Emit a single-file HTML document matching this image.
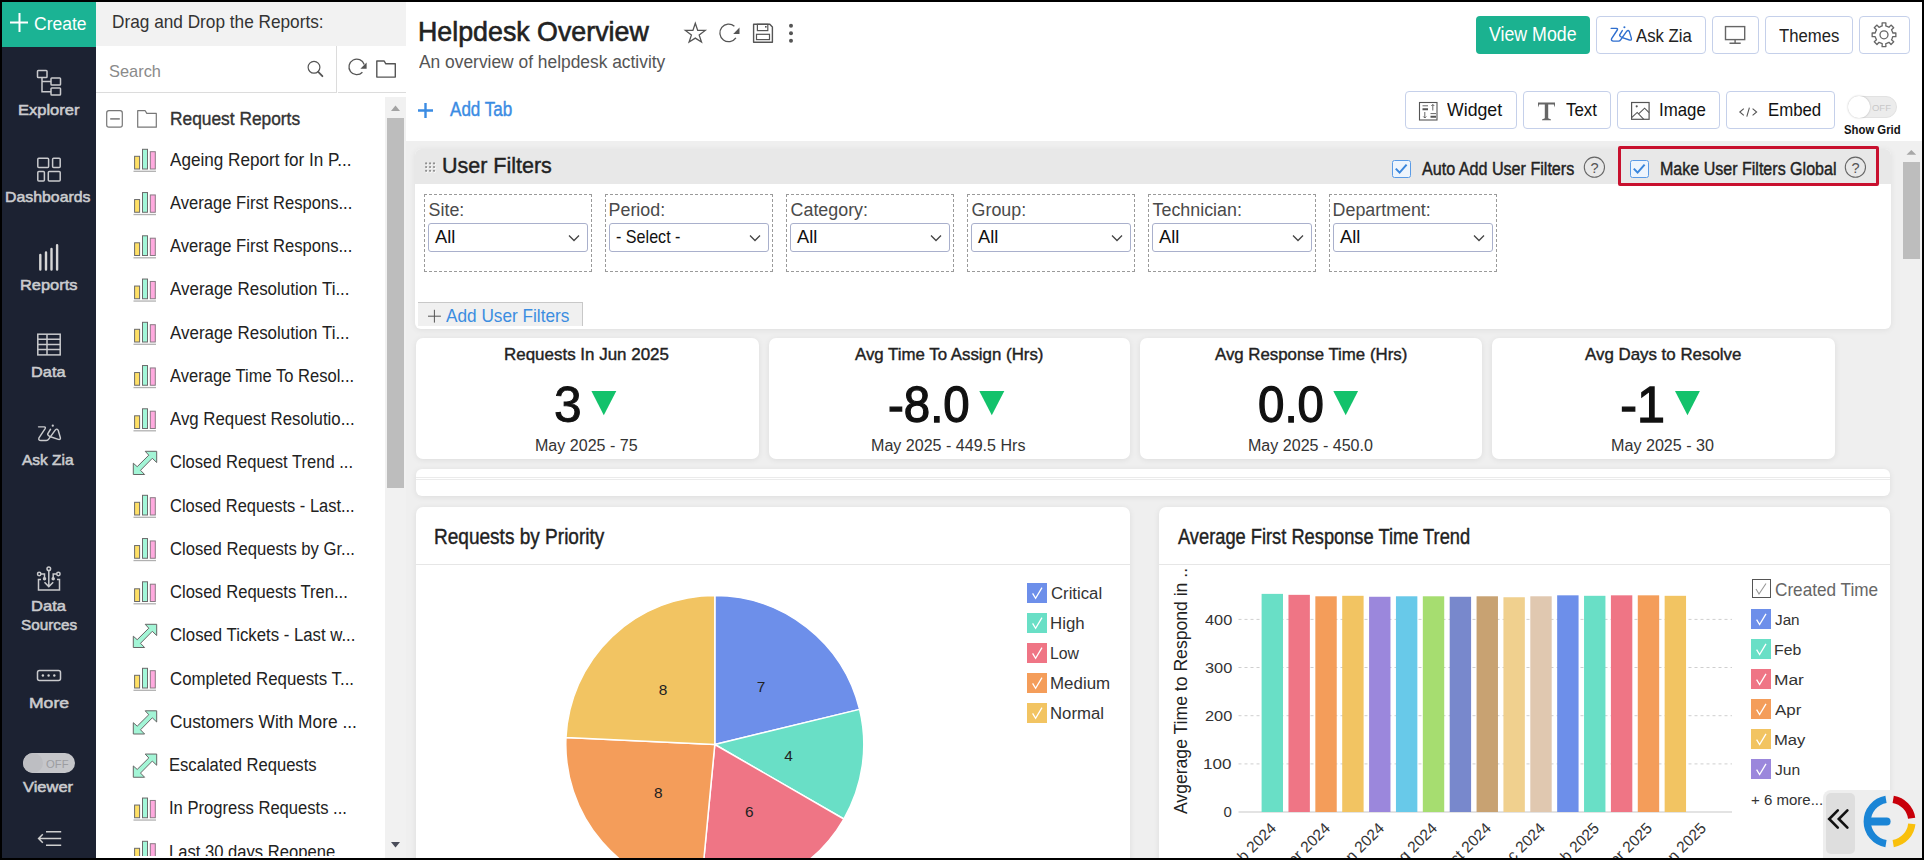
<!DOCTYPE html>
<html><head><meta charset="utf-8"><style>
*{box-sizing:border-box;margin:0;padding:0}
html,body{width:1924px;height:860px;overflow:hidden;background:#fff;font-family:"Liberation Sans",sans-serif}
.a{position:absolute}
.t{position:absolute;white-space:nowrap;line-height:1}
svg{position:absolute;overflow:visible}
.bd{position:absolute;background:#000;z-index:100}
</style></head><body>
<div class="a" style="left:0;top:0;width:96px;height:860px;background:#1c2232"></div>
<div class="a" style="left:0;top:0;width:96px;height:47px;background:#1bb394"></div>
<svg width="96" height="47" style="left:0;top:0"><path d="M19.5 13V32M10 22.5H28" stroke="#fff" stroke-width="2"/></svg>
<svg width="96" height="860" style="left:0;top:0" fill="none" stroke="#c9cacd" stroke-width="1.5">
  <rect x="37.5" y="70.5" width="9.5" height="7" rx="0.8"/>
  <rect x="51" y="78" width="9.5" height="7" rx="0.8"/>
  <rect x="51" y="88" width="9.5" height="7" rx="0.8"/>
  <path d="M42 77.5V91.8H51M42 81.5H51"/>
  <rect x="37.8" y="158.3" width="10.8" height="9.2" rx="1"/>
  <rect x="52.6" y="158.3" width="7.6" height="9.2" rx="1"/>
  <rect x="37.8" y="171.5" width="6.6" height="9.6" rx="1"/>
  <rect x="48.3" y="171.5" width="11.9" height="9.6" rx="1"/>
  <path d="M40.3 255V269.5M46 252.5V269.5M51.5 249V269.5M57.1 245.2V269.5" stroke="#d6d6d6" stroke-width="2.4" stroke-linecap="round"/>
  <rect x="37.8" y="334.2" width="22.4" height="20.7"/>
  <path d="M37.8 339.2H60.2M37.8 344.4H60.2M37.8 349.5H60.2M47 334.2V354.9"/>
  <g transform="translate(-1701.56 396.20) scale(1.08)"><path d="M1611.2 28.4H1616.5Q1618 28.6 1617.3 30L1611.6 38.6Q1610.8 41 1613.4 41.1H1618.4Q1619.8 41.1 1620.6 39.8L1626.8 31.2Q1628.3 29.6 1629.4 31.6L1631.4 38.4Q1631.8 40.6 1629.5 40L1622.3 37.6Q1619.2 36.2 1619.7 34.8L1622.3 30.6" stroke-width="1.35" stroke-linecap="round" stroke-linejoin="round"/><circle cx="1624.4" cy="27.3" r="1.05" fill="#c9cacd" stroke="none"/></g>
  <path d="M41 579.5H38.5V590H59.5V579.5H57"/>
  <path d="M48.8 570.5V586.5M44.5 582.3L48.8 586.6L53.2 582.3M41 574H44.5V578.5M56.6 574H53.2V578.5"/>
  <circle cx="48.8" cy="568.8" r="1.8"/><circle cx="39.2" cy="574" r="1.7"/><circle cx="58.4" cy="574" r="1.7"/>
  <circle cx="44.5" cy="578.8" r="1" fill="#c9cacd"/><circle cx="53.2" cy="578.8" r="1" fill="#c9cacd"/>
  <rect x="37.5" y="670.5" width="23" height="10" rx="2"/>
  <circle cx="42.9" cy="675.5" r="1.2" fill="#d0d0d0" stroke="none"/><circle cx="48.6" cy="675.5" r="1.2" fill="#d0d0d0" stroke="none"/><circle cx="54.3" cy="675.5" r="1.2" fill="#d0d0d0" stroke="none"/>
  <path d="M46 831.8H61.2M46 845.2H61.2M38.6 838.5H61.2M42.8 834.3L38.6 838.5L42.8 842.7" stroke="#cfcfcf"/>
</svg>
<div class="a" style="left:23px;top:753px;width:52px;height:20px;border-radius:10px;background:#c5c6ca"></div>
<div class="a" style="left:23px;top:753px;width:20px;height:20px;border-radius:10px;background:#bdbec2"></div>
<div class="a" style="left:96px;top:2px;width:310px;height:44px;background:#f2f2f2"></div>
<div class="a" style="left:96px;top:92px;width:241px;height:1px;background:#dcdcdc"></div>
<div class="a" style="left:338px;top:92px;width:68px;height:1px;background:#dcdcdc"></div>
<div class="a" style="left:336px;top:46px;width:1px;height:47px;background:#dcdcdc"></div>
<svg width="410" height="140" style="left:0;top:0" fill="none" stroke="#555" stroke-width="1.2">
 <circle cx="314" cy="67.3" r="5.9"/><path d="M318.2 71.8L322.4 76.2" stroke-width="1.8" stroke-linecap="round"/>
 <path d="M364.2 64.5A7.8 7.8 0 1 0 362.4 72.3" stroke-width="1.3"/>
 <path d="M366.6 62.6V68.8H360.4Z" fill="#555" stroke="none"/>
 <path d="M376.8 61H384.2L385.8 63.8H395.3V77.1H376.8Z" stroke-width="1.4" stroke-linejoin="round"/>
 <rect x="106.7" y="110.7" width="15.6" height="16.5" rx="2.2" stroke="#777" stroke-width="1.2"/>
 <path d="M110.2 118.9H119.8" stroke="#777" stroke-width="1.5"/>
 <path d="M137.7 110.7H145.2L146.8 113.4H156.3V127.2H137.7Z" stroke="#777" stroke-width="1.2" stroke-linejoin="round"/>
</svg>
<svg width="410" height="860" style="left:0;top:0;clip-path:inset(93px 0 2px 0)"><g transform="translate(0 0.00)">
 <rect x="134.6" y="156.3" width="5" height="12.7" fill="#ffe066" stroke="#6b6b6b" stroke-width="1"/>
 <rect x="142.5" y="149.3" width="5" height="19.7" fill="#a3f7d9" stroke="#6b6b6b" stroke-width="1"/>
 <rect x="150.3" y="151.7" width="5" height="17.3" fill="#ffaadf" stroke="#8a7a84" stroke-width="1"/>
 <path d="M133.5 171.3H156" stroke="#b0b0b0" stroke-width="1.3"/></g><g transform="translate(0 43.25)">
 <rect x="134.6" y="156.3" width="5" height="12.7" fill="#ffe066" stroke="#6b6b6b" stroke-width="1"/>
 <rect x="142.5" y="149.3" width="5" height="19.7" fill="#a3f7d9" stroke="#6b6b6b" stroke-width="1"/>
 <rect x="150.3" y="151.7" width="5" height="17.3" fill="#ffaadf" stroke="#8a7a84" stroke-width="1"/>
 <path d="M133.5 171.3H156" stroke="#b0b0b0" stroke-width="1.3"/></g><g transform="translate(0 86.50)">
 <rect x="134.6" y="156.3" width="5" height="12.7" fill="#ffe066" stroke="#6b6b6b" stroke-width="1"/>
 <rect x="142.5" y="149.3" width="5" height="19.7" fill="#a3f7d9" stroke="#6b6b6b" stroke-width="1"/>
 <rect x="150.3" y="151.7" width="5" height="17.3" fill="#ffaadf" stroke="#8a7a84" stroke-width="1"/>
 <path d="M133.5 171.3H156" stroke="#b0b0b0" stroke-width="1.3"/></g><g transform="translate(0 129.75)">
 <rect x="134.6" y="156.3" width="5" height="12.7" fill="#ffe066" stroke="#6b6b6b" stroke-width="1"/>
 <rect x="142.5" y="149.3" width="5" height="19.7" fill="#a3f7d9" stroke="#6b6b6b" stroke-width="1"/>
 <rect x="150.3" y="151.7" width="5" height="17.3" fill="#ffaadf" stroke="#8a7a84" stroke-width="1"/>
 <path d="M133.5 171.3H156" stroke="#b0b0b0" stroke-width="1.3"/></g><g transform="translate(0 173.00)">
 <rect x="134.6" y="156.3" width="5" height="12.7" fill="#ffe066" stroke="#6b6b6b" stroke-width="1"/>
 <rect x="142.5" y="149.3" width="5" height="19.7" fill="#a3f7d9" stroke="#6b6b6b" stroke-width="1"/>
 <rect x="150.3" y="151.7" width="5" height="17.3" fill="#ffaadf" stroke="#8a7a84" stroke-width="1"/>
 <path d="M133.5 171.3H156" stroke="#b0b0b0" stroke-width="1.3"/></g><g transform="translate(0 216.25)">
 <rect x="134.6" y="156.3" width="5" height="12.7" fill="#ffe066" stroke="#6b6b6b" stroke-width="1"/>
 <rect x="142.5" y="149.3" width="5" height="19.7" fill="#a3f7d9" stroke="#6b6b6b" stroke-width="1"/>
 <rect x="150.3" y="151.7" width="5" height="17.3" fill="#ffaadf" stroke="#8a7a84" stroke-width="1"/>
 <path d="M133.5 171.3H156" stroke="#b0b0b0" stroke-width="1.3"/></g><g transform="translate(0 259.50)">
 <rect x="134.6" y="156.3" width="5" height="12.7" fill="#ffe066" stroke="#6b6b6b" stroke-width="1"/>
 <rect x="142.5" y="149.3" width="5" height="19.7" fill="#a3f7d9" stroke="#6b6b6b" stroke-width="1"/>
 <rect x="150.3" y="151.7" width="5" height="17.3" fill="#ffaadf" stroke="#8a7a84" stroke-width="1"/>
 <path d="M133.5 171.3H156" stroke="#b0b0b0" stroke-width="1.3"/></g><g transform="translate(0 0.00)"><path d="M145.2 451.3H156.7V462.5L152.3 458.3L140.5 470.3L144.6 474.5H133.3V463.2L137.2 466.7L148.8 455.2Z" fill="#a3f5d6" stroke="#666" stroke-width="1"/></g><g transform="translate(0 346.00)">
 <rect x="134.6" y="156.3" width="5" height="12.7" fill="#ffe066" stroke="#6b6b6b" stroke-width="1"/>
 <rect x="142.5" y="149.3" width="5" height="19.7" fill="#a3f7d9" stroke="#6b6b6b" stroke-width="1"/>
 <rect x="150.3" y="151.7" width="5" height="17.3" fill="#ffaadf" stroke="#8a7a84" stroke-width="1"/>
 <path d="M133.5 171.3H156" stroke="#b0b0b0" stroke-width="1.3"/></g><g transform="translate(0 389.25)">
 <rect x="134.6" y="156.3" width="5" height="12.7" fill="#ffe066" stroke="#6b6b6b" stroke-width="1"/>
 <rect x="142.5" y="149.3" width="5" height="19.7" fill="#a3f7d9" stroke="#6b6b6b" stroke-width="1"/>
 <rect x="150.3" y="151.7" width="5" height="17.3" fill="#ffaadf" stroke="#8a7a84" stroke-width="1"/>
 <path d="M133.5 171.3H156" stroke="#b0b0b0" stroke-width="1.3"/></g><g transform="translate(0 432.50)">
 <rect x="134.6" y="156.3" width="5" height="12.7" fill="#ffe066" stroke="#6b6b6b" stroke-width="1"/>
 <rect x="142.5" y="149.3" width="5" height="19.7" fill="#a3f7d9" stroke="#6b6b6b" stroke-width="1"/>
 <rect x="150.3" y="151.7" width="5" height="17.3" fill="#ffaadf" stroke="#8a7a84" stroke-width="1"/>
 <path d="M133.5 171.3H156" stroke="#b0b0b0" stroke-width="1.3"/></g><g transform="translate(0 173.00)"><path d="M145.2 451.3H156.7V462.5L152.3 458.3L140.5 470.3L144.6 474.5H133.3V463.2L137.2 466.7L148.8 455.2Z" fill="#a3f5d6" stroke="#666" stroke-width="1"/></g><g transform="translate(0 519.00)">
 <rect x="134.6" y="156.3" width="5" height="12.7" fill="#ffe066" stroke="#6b6b6b" stroke-width="1"/>
 <rect x="142.5" y="149.3" width="5" height="19.7" fill="#a3f7d9" stroke="#6b6b6b" stroke-width="1"/>
 <rect x="150.3" y="151.7" width="5" height="17.3" fill="#ffaadf" stroke="#8a7a84" stroke-width="1"/>
 <path d="M133.5 171.3H156" stroke="#b0b0b0" stroke-width="1.3"/></g><g transform="translate(0 259.50)"><path d="M145.2 451.3H156.7V462.5L152.3 458.3L140.5 470.3L144.6 474.5H133.3V463.2L137.2 466.7L148.8 455.2Z" fill="#a3f5d6" stroke="#666" stroke-width="1"/></g><g transform="translate(0 302.75)"><path d="M145.2 451.3H156.7V462.5L152.3 458.3L140.5 470.3L144.6 474.5H133.3V463.2L137.2 466.7L148.8 455.2Z" fill="#a3f5d6" stroke="#666" stroke-width="1"/></g><g transform="translate(0 648.75)">
 <rect x="134.6" y="156.3" width="5" height="12.7" fill="#ffe066" stroke="#6b6b6b" stroke-width="1"/>
 <rect x="142.5" y="149.3" width="5" height="19.7" fill="#a3f7d9" stroke="#6b6b6b" stroke-width="1"/>
 <rect x="150.3" y="151.7" width="5" height="17.3" fill="#ffaadf" stroke="#8a7a84" stroke-width="1"/>
 <path d="M133.5 171.3H156" stroke="#b0b0b0" stroke-width="1.3"/></g><g transform="translate(0 692.00)">
 <rect x="134.6" y="156.3" width="5" height="12.7" fill="#ffe066" stroke="#6b6b6b" stroke-width="1"/>
 <rect x="142.5" y="149.3" width="5" height="19.7" fill="#a3f7d9" stroke="#6b6b6b" stroke-width="1"/>
 <rect x="150.3" y="151.7" width="5" height="17.3" fill="#ffaadf" stroke="#8a7a84" stroke-width="1"/>
 <path d="M133.5 171.3H156" stroke="#b0b0b0" stroke-width="1.3"/></g></svg>
<div class="a" style="left:385px;top:97px;width:21px;height:761px;background:#f1f1f1"></div>
<div class="a" style="left:387px;top:118px;width:17px;height:370px;background:#bdbdbd"></div>
<svg width="410" height="860" style="left:0;top:0"><path d="M391 111H400L395.5 105.5Z" fill="#a3a3a3"/><path d="M391 842H400L395.5 847.5Z" fill="#4a4d5a"/></svg>
<div class="a" style="left:406px;top:2px;width:1516px;height:139px;background:#fff"></div>
<div class="a" style="left:406px;top:141px;width:1516px;height:717px;background:#efefef"></div>
<svg width="100" height="50" style="left:0;top:0" fill="none" stroke="#555" stroke-width="1.3">
      <path d="M695.3 23.2L697.7 30.4H705.2L699.2 35.1L701.5 42L695.3 38.1L689.1 42L691.4 35.1L685.4 30.4H692.9Z" stroke-linejoin="miter"/>
      <path d="M734.4 26.2A8.8 8.8 0 1 0 735.9 37.9" stroke-width="1.3"/>
      <path d="M739.5 27.6V34H733.2Z" fill="#555" stroke="none"/>
      <path d="M753.6 24.3H769.8L772.4 27V42.2H753.6Z" stroke-width="1.4" stroke-linejoin="round"/>
      <rect x="757.4" y="24.3" width="10.4" height="6.3" stroke-width="1.2"/>
      <rect x="756.5" y="34.3" width="13" height="5.3" stroke-width="1.2"/>
      <rect x="765" y="26" width="1.6" height="1.6" fill="#555" stroke="none"/>
      <circle cx="791" cy="25.8" r="2" fill="#555" stroke="none"/><circle cx="791" cy="33.2" r="2" fill="#555" stroke="none"/><circle cx="791" cy="40.7" r="2" fill="#555" stroke="none"/>
      <path d="M425.5 103V118M418 110.5H433" stroke="#3b8ce3" stroke-width="2.4"/>
    </svg>
<div class="a" style="left:1476px;top:16px;width:114px;height:38px;background:#1bb290;border-radius:4px"></div>
<div class="a" style="left:1596px;top:16px;width:110px;height:38px;border:1px solid #c5d0ea;border-radius:4px;background:#fff"></div>
<div class="a" style="left:1712px;top:16px;width:47px;height:38px;border:1px solid #c5d0ea;border-radius:4px;background:#fff"></div>
<div class="a" style="left:1765px;top:16px;width:88px;height:38px;border:1px solid #c5d0ea;border-radius:4px;background:#fff"></div>
<div class="a" style="left:1859px;top:16px;width:51px;height:38px;border:1px solid #c5d0ea;border-radius:4px;background:#fff"></div>
<svg width="10" height="10" style="left:0;top:0" fill="none">
      <path d="M1611.2 28.4H1616.5Q1618 28.6 1617.3 30L1611.6 38.6Q1610.8 41 1613.4 41.1H1618.4Q1619.8 41.1 1620.6 39.8L1626.8 31.2Q1628.3 29.6 1629.4 31.6L1631.4 38.4Q1631.8 40.6 1629.5 40L1622.3 37.6Q1619.2 36.2 1619.7 34.8L1622.3 30.6" stroke="#2f6fcf" stroke-width="1.4" stroke-linecap="round" stroke-linejoin="round"/>
      <circle cx="1624.4" cy="27.3" r="1.05" fill="#2f6fcf"/>
      <rect x="1725.5" y="26.6" width="19.2" height="13" stroke="#666" stroke-width="1.4"/>
      <path d="M1735.1 39.6V43M1729.5 43.3H1740.7" stroke="#666" stroke-width="1.4"/>
    </svg>
<svg width="10" height="10" style="left:0;top:0" fill="none" stroke="#666" stroke-width="1.3"><path d="M1881.40 26.18L1882.21 25.98L1882.09 22.95L1885.91 22.95L1885.79 25.98L1888.26 26.87L1888.97 27.30L1891.03 25.07L1893.73 27.77L1891.50 29.83L1892.62 32.20L1892.82 33.01L1895.85 32.89L1895.85 36.71L1892.82 36.59L1891.93 39.06L1891.50 39.77L1893.73 41.83L1891.03 44.53L1888.97 42.30L1886.60 43.42L1885.79 43.62L1885.91 46.65L1882.09 46.65L1882.21 43.62L1879.74 42.73L1879.03 42.30L1876.97 44.53L1874.27 41.83L1876.50 39.77L1875.38 37.40L1875.18 36.59L1872.15 36.71L1872.15 32.89L1875.18 33.01L1876.07 30.54L1876.50 29.83L1874.27 27.77L1876.97 25.07L1879.03 27.30Z" stroke-linejoin="round"/><circle cx="1884" cy="34.8" r="4"/></svg>
<div class="a" style="left:1405px;top:91px;width:112px;height:38px;border:1px solid #c5d0ea;border-radius:4px;background:#fff"></div>
<div class="a" style="left:1523px;top:91px;width:88px;height:38px;border:1px solid #c5d0ea;border-radius:4px;background:#fff"></div>
<div class="a" style="left:1617px;top:91px;width:103px;height:38px;border:1px solid #c5d0ea;border-radius:4px;background:#fff"></div>
<div class="a" style="left:1726px;top:91px;width:109px;height:38px;border:1px solid #c5d0ea;border-radius:4px;background:#fff"></div>
<svg width="10" height="10" style="left:0;top:0" fill="none" stroke="#555">
      <rect x="1419.5" y="102.5" width="17.5" height="17.5" stroke-width="1.1"/>
      <path d="M1422.5 105.8H1428M1430.5 113.6H1436" stroke-width="0.9"/><path d="M1422.5 109.3H1428M1430.5 116.8H1436" stroke-width="2"/>
      <path d="M1432.8 104.5V110.5M1431.3 106L1432.8 104.5L1434.3 106M1424.8 112V118M1423.3 116.5L1424.8 118L1426.3 116.5" stroke-width="0.9"/>
      <path d="M1538 102.6H1555V107.5L1553.8 104.6H1548.2V118.3L1551 119.4V120.2H1542V119.4L1544.8 118.3V104.6H1539.2L1538 107.5Z" fill="#666" stroke="none"/>
      <rect x="1631.6" y="102.5" width="17.5" height="16.8" stroke-width="1.2"/>
      <path d="M1631.6 117.6L1637.2 112.4L1643.8 119.4M1638.6 113.8L1644.6 108.2L1649.1 112.6" stroke-width="1.1"/>
      <circle cx="1636.7" cy="106.3" r="1.1" fill="#555" stroke="none"/>
      <path d="M1743.8 108.6L1739.8 112L1743.8 115.4M1752.6 108.6L1756.6 112L1752.6 115.4M1749.4 107.6L1746.8 116.6" stroke-width="1.1"/>
    </svg>
<div class="a" style="left:1848px;top:96px;width:49px;height:21.5px;border-radius:11px;background:#ececec;border:1px solid #e2e2e2"></div>
<div class="a" style="left:1847.5px;top:95.8px;width:22px;height:22px;border-radius:11px;background:#fff;box-shadow:0 0 2px rgba(0,0,0,.25)"></div>
<div class="a" style="left:415px;top:149px;width:1476px;height:180px;background:#fff;border-radius:6px;box-shadow:0 1px 6px rgba(0,0,0,.07)"></div>
<div class="a" style="left:415px;top:149px;width:1476px;height:35px;background:#e8e8e8;border-radius:6px 6px 0 0"></div>
<svg width="10" height="10" style="left:0;top:0"><circle cx="426.80" cy="164.30" r="1.1" fill="#fff"/><circle cx="426.10" cy="163.40" r="1.1" fill="#8f8f8f"/><circle cx="426.80" cy="168.00" r="1.1" fill="#fff"/><circle cx="426.10" cy="167.10" r="1.1" fill="#8f8f8f"/><circle cx="426.80" cy="171.70" r="1.1" fill="#fff"/><circle cx="426.10" cy="170.80" r="1.1" fill="#8f8f8f"/><circle cx="430.75" cy="164.30" r="1.1" fill="#fff"/><circle cx="430.05" cy="163.40" r="1.1" fill="#8f8f8f"/><circle cx="430.75" cy="168.00" r="1.1" fill="#fff"/><circle cx="430.05" cy="167.10" r="1.1" fill="#8f8f8f"/><circle cx="430.75" cy="171.70" r="1.1" fill="#fff"/><circle cx="430.05" cy="170.80" r="1.1" fill="#8f8f8f"/><circle cx="434.70" cy="164.30" r="1.1" fill="#fff"/><circle cx="434.00" cy="163.40" r="1.1" fill="#8f8f8f"/><circle cx="434.70" cy="168.00" r="1.1" fill="#fff"/><circle cx="434.00" cy="167.10" r="1.1" fill="#8f8f8f"/><circle cx="434.70" cy="171.70" r="1.1" fill="#fff"/><circle cx="434.00" cy="170.80" r="1.1" fill="#8f8f8f"/></svg>
<div class="a" style="left:1392px;top:160px;width:18.5px;height:17.5px;background:#eef5fd;border:1.2px solid #5a9be6;border-radius:2.5px"></div>
<svg width="10" height="10" style="left:0;top:0"><path d="M1395.8 168.6L1399.6 172.6L1406.6 164.6" fill="none" stroke="#3a86dc" stroke-width="2"/></svg>
<div class="a" style="left:1630px;top:160px;width:18.5px;height:17.5px;background:#eef5fd;border:1.2px solid #5a9be6;border-radius:2.5px"></div>
<svg width="10" height="10" style="left:0;top:0"><path d="M1633.8 168.6L1637.6 172.6L1644.6 164.6" fill="none" stroke="#3a86dc" stroke-width="2"/></svg>
<svg width="10" height="10" style="left:0;top:0"><circle cx="1594.4" cy="167.2" r="10.1" fill="none" stroke="#666" stroke-width="1.1"/></svg>
<svg width="10" height="10" style="left:0;top:0"><circle cx="1855.4" cy="167.2" r="10.1" fill="none" stroke="#666" stroke-width="1.1"/></svg>
<div class="a" style="left:1617.5px;top:145.7px;width:261.5px;height:40.2px;border:3px solid #c8102e;border-radius:2px"></div>
<div class="a" style="left:424px;top:194px;width:168px;height:78px;border:1px dashed #9a9a9a"></div>
<div class="a" style="left:428px;top:223px;width:160px;height:29px;border:1px solid #a9b0cc;border-radius:3px;background:#fff"></div>
<svg width="10" height="10" style="left:0;top:0"><path d="M569 235.5L574 240.5L579 235.5" fill="none" stroke="#444" stroke-width="1.3"/></svg>
<div class="a" style="left:605px;top:194px;width:168px;height:78px;border:1px dashed #9a9a9a"></div>
<div class="a" style="left:609px;top:223px;width:160px;height:29px;border:1px solid #a9b0cc;border-radius:3px;background:#fff"></div>
<svg width="10" height="10" style="left:0;top:0"><path d="M750 235.5L755 240.5L760 235.5" fill="none" stroke="#444" stroke-width="1.3"/></svg>
<div class="a" style="left:786px;top:194px;width:168px;height:78px;border:1px dashed #9a9a9a"></div>
<div class="a" style="left:790px;top:223px;width:160px;height:29px;border:1px solid #a9b0cc;border-radius:3px;background:#fff"></div>
<svg width="10" height="10" style="left:0;top:0"><path d="M931 235.5L936 240.5L941 235.5" fill="none" stroke="#444" stroke-width="1.3"/></svg>
<div class="a" style="left:967px;top:194px;width:168px;height:78px;border:1px dashed #9a9a9a"></div>
<div class="a" style="left:971px;top:223px;width:160px;height:29px;border:1px solid #a9b0cc;border-radius:3px;background:#fff"></div>
<svg width="10" height="10" style="left:0;top:0"><path d="M1112 235.5L1117 240.5L1122 235.5" fill="none" stroke="#444" stroke-width="1.3"/></svg>
<div class="a" style="left:1148px;top:194px;width:168px;height:78px;border:1px dashed #9a9a9a"></div>
<div class="a" style="left:1152px;top:223px;width:160px;height:29px;border:1px solid #a9b0cc;border-radius:3px;background:#fff"></div>
<svg width="10" height="10" style="left:0;top:0"><path d="M1293 235.5L1298 240.5L1303 235.5" fill="none" stroke="#444" stroke-width="1.3"/></svg>
<div class="a" style="left:1329px;top:194px;width:168px;height:78px;border:1px dashed #9a9a9a"></div>
<div class="a" style="left:1333px;top:223px;width:160px;height:29px;border:1px solid #a9b0cc;border-radius:3px;background:#fff"></div>
<svg width="10" height="10" style="left:0;top:0"><path d="M1474 235.5L1479 240.5L1484 235.5" fill="none" stroke="#444" stroke-width="1.3"/></svg>
<div class="a" style="left:418px;top:302px;width:165px;height:24px;background:#f0f0f0;border-top:1px solid #c8c8c8;border-right:1px solid #c8c8c8"></div>
<svg width="10" height="10" style="left:0;top:0"><path d="M434.4 309.8V322.6M428 316.2H440.9" stroke="#555" stroke-width="1"/></svg>
<div class="a" style="left:416px;top:338px;width:343px;height:121px;background:#fff;border-radius:7px;box-shadow:0 1px 6px rgba(0,0,0,.08)"></div>
<svg width="10" height="10" style="left:0;top:0"><path d="M591.4 391H616.3L603.8 415.2Z" fill="#13c26b"/></svg>
<div class="a" style="left:769px;top:338px;width:361px;height:121px;background:#fff;border-radius:7px;box-shadow:0 1px 6px rgba(0,0,0,.08)"></div>
<svg width="10" height="10" style="left:0;top:0"><path d="M979.3 391H1004.3L991.8 415.2Z" fill="#13c26b"/></svg>
<div class="a" style="left:1140px;top:338px;width:342px;height:121px;background:#fff;border-radius:7px;box-shadow:0 1px 6px rgba(0,0,0,.08)"></div>
<svg width="10" height="10" style="left:0;top:0"><path d="M1333.3 391H1358.1L1345.7 415.2Z" fill="#13c26b"/></svg>
<div class="a" style="left:1492px;top:338px;width:343px;height:121px;background:#fff;border-radius:7px;box-shadow:0 1px 6px rgba(0,0,0,.08)"></div>
<svg width="10" height="10" style="left:0;top:0"><path d="M1675 391H1699.9L1687.5 415.2Z" fill="#13c26b"/></svg>
<div class="a" style="left:416px;top:469px;width:1474px;height:27px;background:#fff;border-radius:6px;box-shadow:0 1px 6px rgba(0,0,0,.08)"></div>
<div class="a" style="left:416px;top:477px;width:1474px;height:3px;border-top:1px solid #ebebeb;border-bottom:1px solid #ebebeb"></div>
<div class="a" style="left:416px;top:506.5px;width:714px;height:360px;background:#fff;border-radius:7px;box-shadow:0 1px 6px rgba(0,0,0,.08)"></div>
<div class="a" style="left:416px;top:563.5px;width:714px;height:1px;background:#e6e6e6"></div>
<div class="a" style="left:1159px;top:506.5px;width:731px;height:360px;background:#fff;border-radius:7px;box-shadow:0 1px 6px rgba(0,0,0,.08)"></div>
<div class="a" style="left:1159px;top:563.5px;width:731px;height:1px;background:#e6e6e6"></div>
<svg width="10" height="10" style="left:0;top:0;clip-path:polygon(0 0,2000px 0,2000px 858px,0 858px)"><path d="M714.8 744.5L714.80 595.50A149 149 0 0 1 859.60 709.37Z" fill="#6d8fea" stroke="#fff" stroke-width="1.5" stroke-linejoin="round"/><path d="M714.8 744.5L859.60 709.37A149 149 0 0 1 843.84 819.00Z" fill="#69dfc6" stroke="#fff" stroke-width="1.5" stroke-linejoin="round"/><path d="M714.8 744.5L843.84 819.00A149 149 0 0 1 700.64 892.83Z" fill="#ef7585" stroke="#fff" stroke-width="1.5" stroke-linejoin="round"/><path d="M714.8 744.5L700.64 892.83A149 149 0 0 1 565.97 737.41Z" fill="#f49d5a" stroke="#fff" stroke-width="1.5" stroke-linejoin="round"/><path d="M714.8 744.5L565.97 737.41A149 149 0 0 1 714.80 595.50Z" fill="#f2c462" stroke="#fff" stroke-width="1.5" stroke-linejoin="round"/></svg>
<div class="a" style="left:1027px;top:583.1px;width:20px;height:19.6px;background:#6d8fea"></div>
<svg width="10" height="10" style="left:0;top:0"><path d="M1032.6 593.4L1035.6 598.3000000000001L1042 587.6" fill="none" stroke="#fff" stroke-width="1.3"/></svg>
<div class="a" style="left:1027px;top:613.1px;width:20px;height:19.6px;background:#69dfc6"></div>
<svg width="10" height="10" style="left:0;top:0"><path d="M1032.6 623.4L1035.6 628.3000000000001L1042 617.6" fill="none" stroke="#fff" stroke-width="1.3"/></svg>
<div class="a" style="left:1027px;top:643.1px;width:20px;height:19.6px;background:#ef7585"></div>
<svg width="10" height="10" style="left:0;top:0"><path d="M1032.6 653.4L1035.6 658.3000000000001L1042 647.6" fill="none" stroke="#fff" stroke-width="1.3"/></svg>
<div class="a" style="left:1027px;top:673.1px;width:20px;height:19.6px;background:#f49d5a"></div>
<svg width="10" height="10" style="left:0;top:0"><path d="M1032.6 683.4L1035.6 688.3000000000001L1042 677.6" fill="none" stroke="#fff" stroke-width="1.3"/></svg>
<div class="a" style="left:1027px;top:703.1px;width:20px;height:19.6px;background:#f2c462"></div>
<svg width="10" height="10" style="left:0;top:0"><path d="M1032.6 713.4L1035.6 718.3000000000001L1042 707.6" fill="none" stroke="#fff" stroke-width="1.3"/></svg>
<svg width="10" height="10" style="left:0;top:0"><path d="M1238.5 763.9H1732" stroke="#cfcfcf" stroke-width="1" stroke-dasharray="3 3"/><path d="M1238.5 715.7H1732" stroke="#cfcfcf" stroke-width="1" stroke-dasharray="3 3"/><path d="M1238.5 667.5H1732" stroke="#cfcfcf" stroke-width="1" stroke-dasharray="3 3"/><path d="M1238.5 619.4H1732" stroke="#cfcfcf" stroke-width="1" stroke-dasharray="3 3"/><path d="M1238.5 812.0H1732" stroke="#c8c8c8" stroke-width="1.2"/><rect x="1261.60" y="593.88" width="21.4" height="218.12" fill="#69dfc6"/><rect x="1288.47" y="594.84" width="21.4" height="217.16" fill="#ef7585"/><rect x="1315.34" y="596.29" width="21.4" height="215.71" fill="#f49d5a"/><rect x="1342.21" y="595.81" width="21.4" height="216.19" fill="#f2c462"/><rect x="1369.08" y="596.77" width="21.4" height="215.23" fill="#9b87dc"/><rect x="1395.95" y="596.29" width="21.4" height="215.71" fill="#68c9e9"/><rect x="1422.82" y="596.29" width="21.4" height="215.71" fill="#a6dd70"/><rect x="1449.69" y="596.77" width="21.4" height="215.23" fill="#7888cc"/><rect x="1476.56" y="596.29" width="21.4" height="215.71" fill="#c8a272"/><rect x="1503.43" y="597.25" width="21.4" height="214.75" fill="#f0d08e"/><rect x="1530.30" y="596.29" width="21.4" height="215.71" fill="#e0c8b0"/><rect x="1557.17" y="595.33" width="21.4" height="216.67" fill="#6d8fea"/><rect x="1584.04" y="595.81" width="21.4" height="216.19" fill="#69dfc6"/><rect x="1610.91" y="595.33" width="21.4" height="216.67" fill="#ef7585"/><rect x="1637.78" y="595.33" width="21.4" height="216.67" fill="#f49d5a"/><rect x="1664.65" y="595.81" width="21.4" height="216.19" fill="#f2c462"/></svg>
<div class="a" style="left:1751.5px;top:578.5px;width:19.5px;height:19.5px;border:1.3px solid #555;background:#fff"></div>
<svg width="10" height="10" style="left:0;top:0"><path d="M1756 589L1759 594L1766 583.5" fill="none" stroke="#999" stroke-width="1.1"/></svg>
<div class="a" style="left:1751px;top:609.3px;width:20px;height:19.7px;background:#6d8fea"></div>
<svg width="10" height="10" style="left:0;top:0"><path d="M1756.6 619.5999999999999L1759.6 624.5L1766 613.8" fill="none" stroke="#fff" stroke-width="1.3"/></svg>
<div class="a" style="left:1751px;top:639.3px;width:20px;height:19.7px;background:#69dfc6"></div>
<svg width="10" height="10" style="left:0;top:0"><path d="M1756.6 649.5999999999999L1759.6 654.5L1766 643.8" fill="none" stroke="#fff" stroke-width="1.3"/></svg>
<div class="a" style="left:1751px;top:669.3px;width:20px;height:19.7px;background:#ef7585"></div>
<svg width="10" height="10" style="left:0;top:0"><path d="M1756.6 679.5999999999999L1759.6 684.5L1766 673.8" fill="none" stroke="#fff" stroke-width="1.3"/></svg>
<div class="a" style="left:1751px;top:699.3px;width:20px;height:19.7px;background:#f49d5a"></div>
<svg width="10" height="10" style="left:0;top:0"><path d="M1756.6 709.5999999999999L1759.6 714.5L1766 703.8" fill="none" stroke="#fff" stroke-width="1.3"/></svg>
<div class="a" style="left:1751px;top:729.3px;width:20px;height:19.7px;background:#f2c462"></div>
<svg width="10" height="10" style="left:0;top:0"><path d="M1756.6 739.5999999999999L1759.6 744.5L1766 733.8" fill="none" stroke="#fff" stroke-width="1.3"/></svg>
<div class="a" style="left:1751px;top:759.3px;width:20px;height:19.7px;background:#9b87dc"></div>
<svg width="10" height="10" style="left:0;top:0"><path d="M1756.6 769.5999999999999L1759.6 774.5L1766 763.8" fill="none" stroke="#fff" stroke-width="1.3"/></svg>
<div class="a" style="left:1900px;top:141px;width:22px;height:717px;background:#f0f0f0"></div>
<div class="a" style="left:1903px;top:162px;width:17px;height:97px;background:#bdbdbd"></div>
<svg width="10" height="10" style="left:0;top:0"><path d="M1906.5 154.7H1916.2L1911.35 150Z" fill="#a8a8a8"/></svg>
<div class="t" style="left:33.50px;top:15.40px;font-size:18.429px;color:#fff;transform:scaleX(0.9508);transform-origin:0 0;">Create</div>
<div class="t" style="left:17.93px;top:101.54px;font-size:15.429px;-webkit-text-stroke:0.55px #cbcccf;color:#cbcccf;transform:scaleX(1.0705);transform-origin:0 0;">Explorer</div>
<div class="t" style="left:5.47px;top:188.94px;font-size:15.429px;-webkit-text-stroke:0.55px #cbcccf;color:#cbcccf;transform:scaleX(1.0295);transform-origin:0 0;">Dashboards</div>
<div class="t" style="left:19.64px;top:277.14px;font-size:15.429px;-webkit-text-stroke:0.55px #cbcccf;color:#cbcccf;transform:scaleX(1.0650);transform-origin:0 0;">Reports</div>
<div class="t" style="left:30.94px;top:363.84px;font-size:15.429px;-webkit-text-stroke:0.55px #cbcccf;color:#cbcccf;transform:scaleX(1.0602);transform-origin:0 0;">Data</div>
<div class="t" style="left:22.40px;top:451.64px;font-size:15.429px;-webkit-text-stroke:0.55px #cbcccf;color:#cbcccf;transform:scaleX(1.0039);transform-origin:0 0;">Ask Zia</div>
<div class="t" style="left:30.93px;top:598.04px;font-size:15.429px;-webkit-text-stroke:0.55px #cbcccf;color:#cbcccf;transform:scaleX(1.0727);transform-origin:0 0;">Data</div>
<div class="t" style="left:20.90px;top:617.04px;font-size:15.429px;-webkit-text-stroke:0.55px #cbcccf;color:#cbcccf;transform:scaleX(0.9927);transform-origin:0 0;">Sources</div>
<div class="t" style="left:28.76px;top:694.74px;font-size:15.429px;-webkit-text-stroke:0.55px #cbcccf;color:#cbcccf;transform:scaleX(1.1392);transform-origin:0 0;">More</div>
<div class="t" style="left:46.40px;top:759.41px;font-size:10.857px;color:#9c9da1;transform:scaleX(1.0382);transform-origin:0 0;">OFF</div>
<div class="t" style="left:23.45px;top:778.94px;font-size:15.429px;-webkit-text-stroke:0.55px #cbcccf;color:#cbcccf;transform:scaleX(1.0689);transform-origin:0 0;">Viewer</div>
<div class="t" style="left:112.05px;top:12.94px;font-size:18.143px;color:#333;transform:scaleX(0.9505);transform-origin:0 0;">Drag and Drop the Reports:</div>
<div class="t" style="left:108.70px;top:62.95px;font-size:17.429px;color:#8a8a8a;transform:scaleX(0.9418);transform-origin:0 0;">Search</div>
<div class="t" style="left:169.60px;top:109.47px;font-size:19.286px;-webkit-text-stroke:0.4px #333;color:#333;transform:scaleX(0.8997);transform-origin:0 0;">Request Reports</div>
<div class="t" style="left:169.80px;top:151.68px;font-size:17.857px;color:#222;transform:scaleX(0.9603);transform-origin:0 0;">Ageing Report for In P...</div>
<div class="t" style="left:169.80px;top:194.93px;font-size:17.857px;color:#222;transform:scaleX(0.9299);transform-origin:0 0;">Average First Respons...</div>
<div class="t" style="left:169.80px;top:238.18px;font-size:17.857px;color:#222;transform:scaleX(0.9299);transform-origin:0 0;">Average First Respons...</div>
<div class="t" style="left:169.80px;top:281.43px;font-size:17.857px;color:#222;transform:scaleX(0.9492);transform-origin:0 0;">Average Resolution Ti...</div>
<div class="t" style="left:169.80px;top:324.68px;font-size:17.857px;color:#222;transform:scaleX(0.9492);transform-origin:0 0;">Average Resolution Ti...</div>
<div class="t" style="left:169.80px;top:367.93px;font-size:17.857px;color:#222;transform:scaleX(0.9265);transform-origin:0 0;">Average Time To Resol...</div>
<div class="t" style="left:169.80px;top:411.18px;font-size:17.857px;color:#222;transform:scaleX(0.9421);transform-origin:0 0;">Avg Request Resolutio...</div>
<div class="t" style="left:169.80px;top:454.43px;font-size:17.857px;color:#222;transform:scaleX(0.9271);transform-origin:0 0;">Closed Request Trend ...</div>
<div class="t" style="left:169.80px;top:497.68px;font-size:17.857px;color:#222;transform:scaleX(0.9218);transform-origin:0 0;">Closed Requests - Last...</div>
<div class="t" style="left:169.80px;top:540.93px;font-size:17.857px;color:#222;transform:scaleX(0.9326);transform-origin:0 0;">Closed Requests by Gr...</div>
<div class="t" style="left:169.80px;top:584.18px;font-size:17.857px;color:#222;transform:scaleX(0.9288);transform-origin:0 0;">Closed Requests Tren...</div>
<div class="t" style="left:169.80px;top:627.43px;font-size:17.857px;color:#222;transform:scaleX(0.9395);transform-origin:0 0;">Closed Tickets - Last w...</div>
<div class="t" style="left:169.80px;top:670.68px;font-size:17.857px;color:#222;transform:scaleX(0.9433);transform-origin:0 0;">Completed Requests T...</div>
<div class="t" style="left:169.80px;top:713.93px;font-size:17.857px;color:#222;transform:scaleX(0.9713);transform-origin:0 0;">Customers With More ...</div>
<div class="t" style="left:168.87px;top:757.18px;font-size:17.857px;color:#222;transform:scaleX(0.9298);transform-origin:0 0;">Escalated Requests</div>
<div class="t" style="left:168.87px;top:800.43px;font-size:17.857px;color:#222;transform:scaleX(0.9295);transform-origin:0 0;">In Progress Requests ...</div>
<div class="t" style="left:168.87px;top:843.68px;font-size:17.857px;color:#222;transform:scaleX(0.9306);transform-origin:0 0;">Last 30 days Reopene...</div>
<div class="t" style="left:418.32px;top:17.52px;font-size:27.143px;-webkit-text-stroke:0.6px #222;color:#222;transform:scaleX(0.9876);transform-origin:0 0;">Helpdesk Overview</div>
<div class="t" style="left:418.70px;top:52.96px;font-size:18.000px;color:#555;transform:scaleX(0.9654);transform-origin:0 0;">An overview of helpdesk activity</div>
<div class="t" style="left:449.90px;top:100.13px;font-size:19.571px;-webkit-text-stroke:0.4px #3b8ce3;color:#3b8ce3;transform:scaleX(0.8720);transform-origin:0 0;">Add Tab</div>
<div class="t" style="left:1489.40px;top:25.31px;font-size:19.714px;color:#fff;transform:scaleX(0.9017);transform-origin:0 0;">View Mode</div>
<div class="t" style="left:1636.00px;top:25.57px;font-size:19.286px;color:#222;transform:scaleX(0.8680);transform-origin:0 0;">Ask Zia</div>
<div class="t" style="left:1778.80px;top:25.57px;font-size:19.286px;color:#222;transform:scaleX(0.8672);transform-origin:0 0;">Themes</div>
<div class="t" style="left:1447.40px;top:101.48px;font-size:18.571px;color:#111;transform:scaleX(0.9537);transform-origin:0 0;">Widget</div>
<div class="t" style="left:1566.00px;top:101.48px;font-size:18.571px;color:#111;transform:scaleX(0.9087);transform-origin:0 0;">Text</div>
<div class="t" style="left:1659.49px;top:101.48px;font-size:18.571px;color:#111;transform:scaleX(0.9072);transform-origin:0 0;">Image</div>
<div class="t" style="left:1767.50px;top:101.48px;font-size:18.571px;color:#111;transform:scaleX(0.9045);transform-origin:0 0;">Embed</div>
<div class="t" style="left:1871.50px;top:104.14px;font-size:9.286px;color:#c8c8c8;transform:scaleX(1.0230);transform-origin:0 0;">OFF</div>
<div class="t" style="left:1843.60px;top:124.96px;font-size:11.857px;font-weight:700;color:#111;transform:scaleX(0.9562);transform-origin:0 0;">Show Grid</div>
<div class="t" style="left:442.20px;top:155.86px;font-size:21.429px;-webkit-text-stroke:0.4px #222;color:#222;transform:scaleX(1.0036);transform-origin:0 0;">User Filters</div>
<div class="t" style="left:1421.80px;top:161.08px;font-size:17.857px;-webkit-text-stroke:0.4px #222;color:#222;transform:scaleX(0.9030);transform-origin:0 0;">Auto Add User Filters</div>
<div class="t" style="left:1659.60px;top:161.08px;font-size:17.857px;-webkit-text-stroke:0.4px #222;color:#222;transform:scaleX(0.8988);transform-origin:0 0;">Make User Filters Global</div>
<div class="t" style="left:1590.40px;top:160.87px;font-size:14.571px;color:#555;">?</div>
<div class="t" style="left:1851.40px;top:160.87px;font-size:14.571px;color:#555;">?</div>
<div class="t" style="left:428.60px;top:201.88px;font-size:17.857px;color:#4a4a4a;">Site:</div>
<div class="t" style="left:435.00px;top:227.72px;font-size:18.286px;color:#111;">All</div>
<div class="t" style="left:608.60px;top:201.88px;font-size:17.857px;color:#4a4a4a;">Period:</div>
<div class="t" style="left:616.00px;top:227.72px;font-size:18.286px;color:#111;transform:scaleX(0.8822);transform-origin:0 0;">- Select -</div>
<div class="t" style="left:790.60px;top:201.88px;font-size:17.857px;color:#4a4a4a;">Category:</div>
<div class="t" style="left:797.00px;top:227.72px;font-size:18.286px;color:#111;">All</div>
<div class="t" style="left:971.60px;top:201.88px;font-size:17.857px;color:#4a4a4a;">Group:</div>
<div class="t" style="left:978.00px;top:227.72px;font-size:18.286px;color:#111;">All</div>
<div class="t" style="left:1152.60px;top:201.88px;font-size:17.857px;color:#4a4a4a;">Technician:</div>
<div class="t" style="left:1159.00px;top:227.72px;font-size:18.286px;color:#111;">All</div>
<div class="t" style="left:1332.60px;top:201.88px;font-size:17.857px;color:#4a4a4a;">Department:</div>
<div class="t" style="left:1340.00px;top:227.72px;font-size:18.286px;color:#111;">All</div>
<div class="t" style="left:445.50px;top:306.84px;font-size:18.143px;color:#3b8de0;transform:scaleX(0.9494);transform-origin:0 0;">Add User Filters</div>
<div class="t" style="left:504.43px;top:346.45px;font-size:17.429px;-webkit-text-stroke:0.4px #222;color:#222;transform:scaleX(0.9740);transform-origin:0 0;">Requests In Jun 2025</div>
<div class="t" style="left:554.01px;top:380.43px;font-size:50.286px;-webkit-text-stroke:0.9px #111;color:#111;transform:scaleX(0.9880);transform-origin:0 0;">3</div>
<div class="t" style="left:535.20px;top:437.66px;font-size:16.000px;color:#333;transform:scaleX(1.0031);transform-origin:0 0;">May 2025 - 75</div>
<div class="t" style="left:854.60px;top:346.45px;font-size:17.429px;-webkit-text-stroke:0.4px #222;color:#222;transform:scaleX(0.9675);transform-origin:0 0;">Avg Time To Assign (Hrs)</div>
<div class="t" style="left:888.11px;top:380.43px;font-size:50.286px;-webkit-text-stroke:1.3px #111;color:#111;transform:scaleX(0.9436);transform-origin:0 0;">-8.0</div>
<div class="t" style="left:871.30px;top:437.66px;font-size:16.000px;color:#333;transform:scaleX(1.0036);transform-origin:0 0;">May 2025 - 449.5 Hrs</div>
<div class="t" style="left:1215.20px;top:346.45px;font-size:17.429px;-webkit-text-stroke:0.4px #222;color:#222;transform:scaleX(0.9664);transform-origin:0 0;">Avg Response Time (Hrs)</div>
<div class="t" style="left:1257.96px;top:380.43px;font-size:50.286px;-webkit-text-stroke:1.3px #111;color:#111;transform:scaleX(0.9444);transform-origin:0 0;">0.0</div>
<div class="t" style="left:1247.90px;top:437.66px;font-size:16.000px;color:#333;transform:scaleX(1.0030);transform-origin:0 0;">May 2025 - 450.0</div>
<div class="t" style="left:1585.40px;top:346.45px;font-size:17.429px;-webkit-text-stroke:0.4px #222;color:#222;transform:scaleX(0.9697);transform-origin:0 0;">Avg Days to Resolve</div>
<div class="t" style="left:1620.30px;top:380.43px;font-size:50.286px;-webkit-text-stroke:1.3px #111;color:#111;">-1</div>
<div class="t" style="left:1611.19px;top:437.66px;font-size:16.000px;color:#333;transform:scaleX(1.0071);transform-origin:0 0;">May 2025 - 30</div>
<div class="t" style="left:434.01px;top:526.66px;font-size:21.429px;-webkit-text-stroke:0.4px #222;color:#222;transform:scaleX(0.8893);transform-origin:0 0;">Requests by Priority</div>
<div class="t" style="left:1178.20px;top:526.66px;font-size:21.429px;-webkit-text-stroke:0.4px #222;color:#222;transform:scaleX(0.8535);transform-origin:0 0;">Average First Response Time Trend</div>
<div class="t" style="left:756.70px;top:678.94px;font-size:15.429px;color:#222;">7</div>
<div class="t" style="left:784.30px;top:747.64px;font-size:15.429px;color:#222;">4</div>
<div class="t" style="left:744.90px;top:803.74px;font-size:15.429px;color:#222;">6</div>
<div class="t" style="left:654.00px;top:785.44px;font-size:15.429px;color:#222;">8</div>
<div class="t" style="left:658.70px;top:682.34px;font-size:15.429px;color:#222;">8</div>
<div class="t" style="left:1051.40px;top:585.72px;font-size:15.571px;color:#333;transform:scaleX(1.0744);transform-origin:0 0;">Critical</div>
<div class="t" style="left:1050.32px;top:615.72px;font-size:15.571px;color:#333;transform:scaleX(1.0807);transform-origin:0 0;">High</div>
<div class="t" style="left:1050.38px;top:645.72px;font-size:15.571px;color:#333;transform:scaleX(1.0173);transform-origin:0 0;">Low</div>
<div class="t" style="left:1050.31px;top:675.72px;font-size:15.571px;color:#333;transform:scaleX(1.0864);transform-origin:0 0;">Medium</div>
<div class="t" style="left:1050.32px;top:705.72px;font-size:15.571px;color:#333;transform:scaleX(1.0761);transform-origin:0 0;">Normal</div>
<div class="t" style="left:1203.46px;top:756.15px;font-size:15.000px;color:#333;transform:scaleX(1.1358);transform-origin:0 0;">100</div>
<div class="t" style="left:1204.60px;top:708.00px;font-size:15.000px;color:#333;transform:scaleX(1.0897);transform-origin:0 0;">200</div>
<div class="t" style="left:1204.60px;top:659.85px;font-size:15.000px;color:#333;transform:scaleX(1.0897);transform-origin:0 0;">300</div>
<div class="t" style="left:1204.60px;top:611.70px;font-size:15.000px;color:#333;transform:scaleX(1.0897);transform-origin:0 0;">400</div>
<div class="t" style="left:1223.50px;top:804.30px;font-size:15.000px;color:#333;">0</div>
<div class="t" style="left:1774.70px;top:581.04px;font-size:18.143px;color:#666;transform:scaleX(0.9474);transform-origin:0 0;">Created Time</div>
<div class="t" style="left:1775.00px;top:612.28px;font-size:15.143px;color:#333;transform:scaleX(1.0094);transform-origin:0 0;">Jan</div>
<div class="t" style="left:1773.96px;top:642.28px;font-size:15.143px;color:#333;transform:scaleX(1.0426);transform-origin:0 0;">Feb</div>
<div class="t" style="left:1773.85px;top:672.28px;font-size:15.143px;color:#333;transform:scaleX(1.1475);transform-origin:0 0;">Mar</div>
<div class="t" style="left:1775.00px;top:702.28px;font-size:15.143px;color:#333;transform:scaleX(1.1191);transform-origin:0 0;">Apr</div>
<div class="t" style="left:1773.90px;top:732.28px;font-size:15.143px;color:#333;transform:scaleX(1.0996);transform-origin:0 0;">May</div>
<div class="t" style="left:1775.00px;top:762.28px;font-size:15.143px;color:#333;transform:scaleX(1.0344);transform-origin:0 0;">Jun</div>
<div class="t" style="left:1751.20px;top:792.18px;font-size:15.143px;color:#333;transform:scaleX(0.9928);transform-origin:0 0;">+ 6 more...</div>
<div class="a" style="left:96px;top:856px;width:289px;height:2px;background:#fff;z-index:99"></div>
<div class="t" style="left:1193.1px;top:819.8px;width:75px;text-align:right;font-size:15.5px;color:#333;transform:rotate(-45deg);transform-origin:100% 0;">Feb 2024</div>
<div class="t" style="left:1246.84px;top:819.8px;width:75px;text-align:right;font-size:15.5px;color:#333;transform:rotate(-45deg);transform-origin:100% 0;">Apr 2024</div>
<div class="t" style="left:1300.58px;top:819.8px;width:75px;text-align:right;font-size:15.5px;color:#333;transform:rotate(-45deg);transform-origin:100% 0;">Jun 2024</div>
<div class="t" style="left:1354.32px;top:819.8px;width:75px;text-align:right;font-size:15.5px;color:#333;transform:rotate(-45deg);transform-origin:100% 0;">Aug 2024</div>
<div class="t" style="left:1408.06px;top:819.8px;width:75px;text-align:right;font-size:15.5px;color:#333;transform:rotate(-45deg);transform-origin:100% 0;">Oct 2024</div>
<div class="t" style="left:1461.8px;top:819.8px;width:75px;text-align:right;font-size:15.5px;color:#333;transform:rotate(-45deg);transform-origin:100% 0;">Dec 2024</div>
<div class="t" style="left:1515.54px;top:819.8px;width:75px;text-align:right;font-size:15.5px;color:#333;transform:rotate(-45deg);transform-origin:100% 0;">Feb 2025</div>
<div class="t" style="left:1569.28px;top:819.8px;width:75px;text-align:right;font-size:15.5px;color:#333;transform:rotate(-45deg);transform-origin:100% 0;">Apr 2025</div>
<div class="t" style="left:1623.02px;top:819.8px;width:75px;text-align:right;font-size:15.5px;color:#333;transform:rotate(-45deg);transform-origin:100% 0;">Jun 2025</div>
<div class="t" style="left:1181.6px;top:691px;font-size:17.6px;color:#222;transform:translate(-50%,-50%) rotate(-90deg);">Avgerage Time to Respond in ..</div>
<div class="a" style="left:1822.5px;top:789.5px;width:110px;height:80px;background:#eeeeee;border-radius:8px;z-index:50"></div>
<div class="a" style="left:1826px;top:793px;width:29px;height:61px;background:#dedede;border-radius:5px;z-index:51"></div>
<svg width="10" height="10" style="left:0;top:0;z-index:52" fill="none">
      <path d="M1837.8 810.4L1829.2 819L1837.8 827.6M1847.4 810.4L1838.8 819L1847.4 827.6" stroke="#111" stroke-width="2.6" stroke-linecap="round"/>
      <path d="M1886 799.4A22.4 22.4 0 0 0 1886 843.6" stroke="#1a85d6" stroke-width="7.3"/>
      <path d="M1868 821.5H1886.6" stroke="#1a85d6" stroke-width="8" stroke-linecap="round"/>
      <path d="M1893.2 799.4A22.4 22.4 0 0 1 1911.65 818.2" stroke="#c8000a" stroke-width="7.3"/>
      <path d="M1911.8 823.8A22.4 22.4 0 0 1 1893.2 843.6" stroke="#f9c00c" stroke-width="7.3"/>
    </svg>
<div class="bd" style="left:0;top:0;width:1924px;height:2px"></div>
<div class="bd" style="left:0;top:0;width:2px;height:860px"></div>
<div class="bd" style="left:1922px;top:0;width:2px;height:860px"></div>
<div class="bd" style="left:0;top:858px;width:1924px;height:2px"></div>
</body></html>
